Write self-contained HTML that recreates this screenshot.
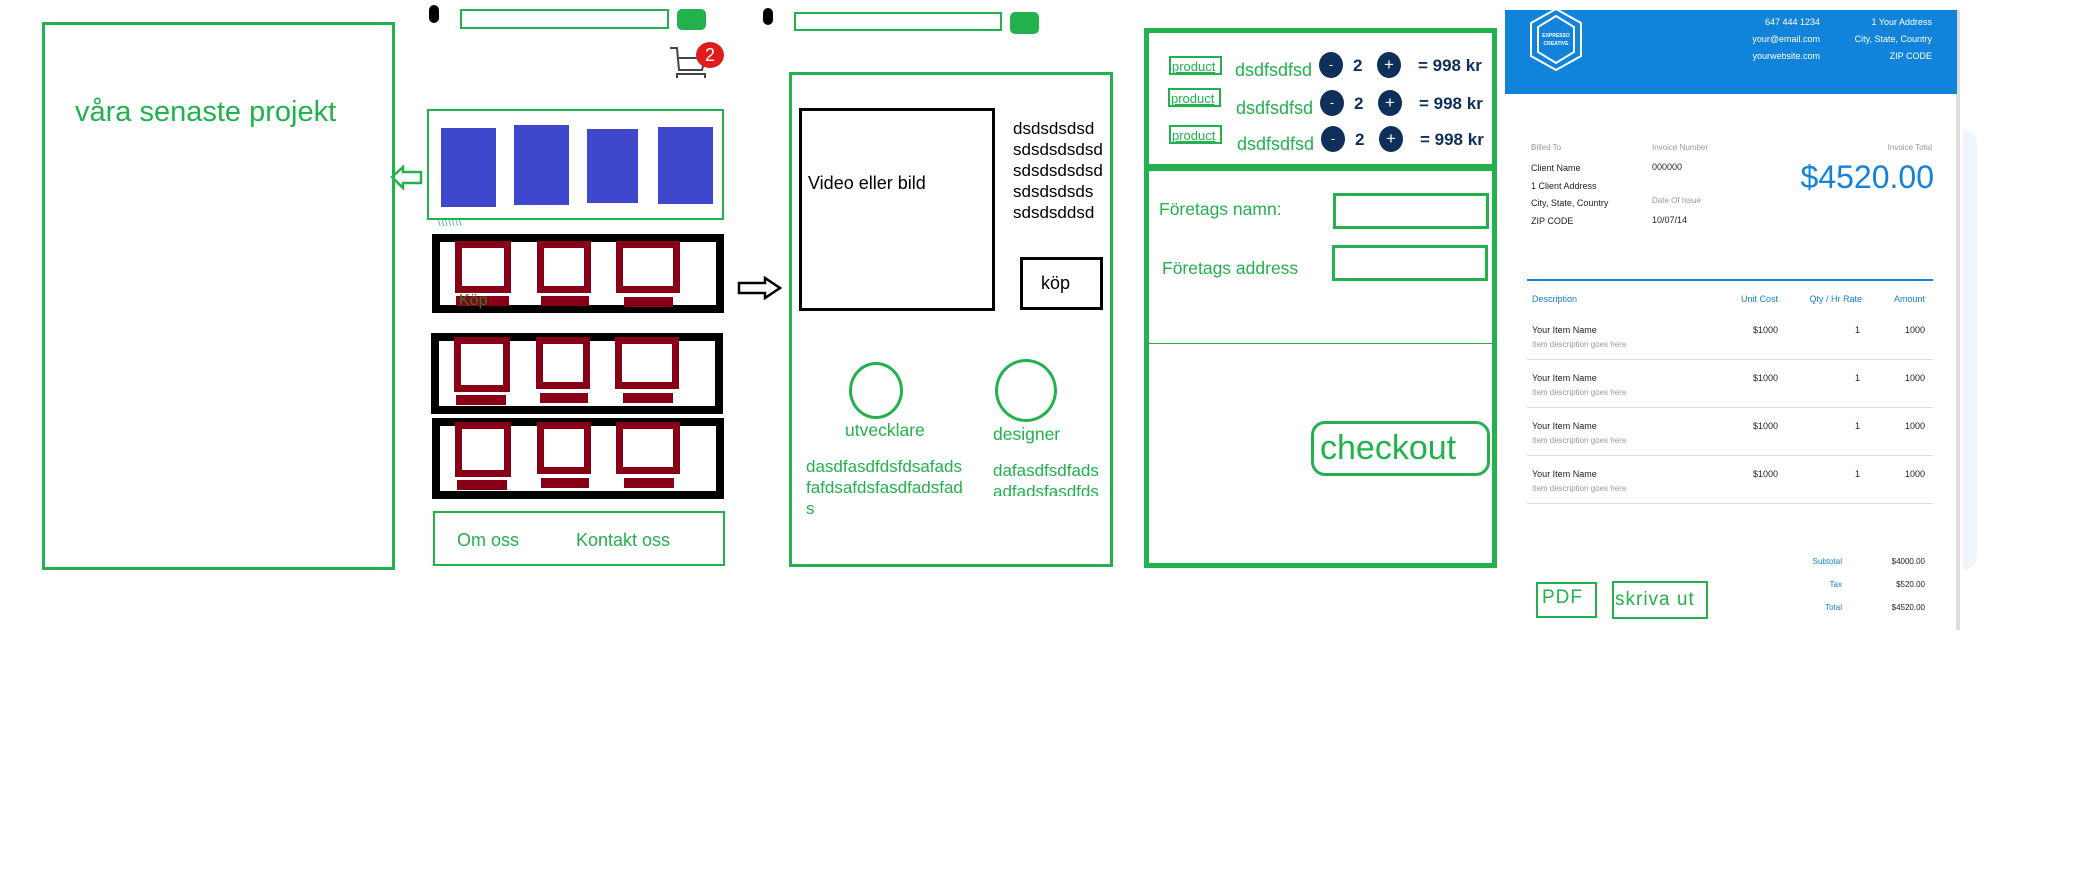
<!DOCTYPE html>
<html><head><meta charset="utf-8"><style>
*{margin:0;padding:0;box-sizing:border-box}
body{width:2079px;height:869px;background:#fff;position:relative;overflow:hidden;font-family:"Liberation Sans",sans-serif}
.a{position:absolute}
.g{color:#22b14c}
.gb{border:1px solid #22b14c}
.blk{border:8px solid #000}
.sq{position:absolute;border:7px solid #880015;width:56px;height:52px}
.bar{position:absolute;background:#880015;height:10px}
.bl{position:absolute;background:#3f48cc}
.t{position:absolute;white-space:nowrap;line-height:1}
.inv{font-size:9px;color:#222}
.lt{color:#999}
.bt{color:#1283da}
.r{text-align:right}
</style></head><body>

<div class="a" style="left:42px;top:22px;width:353px;height:548px;border:3px solid #22b14c"></div>
<div class="t g" style="left:75px;top:98px;font-size:29px">våra senaste projekt</div>
<svg class="a" style="left:390px;top:165px" width="34" height="25"><path d="M2 12 L13 2 L13 7 L31 7 L31 18 L13 18 L13 23 Z" fill="none" stroke="#22b14c" stroke-width="2.5"/></svg>

<div class="a" style="left:429px;top:5px;width:10px;height:18px;background:#000;border-radius:5px"></div>
<div class="a gb" style="left:460px;top:9px;width:209px;height:20px;border-width:2px"></div>
<div class="a" style="left:677px;top:9px;width:29px;height:21px;background:#22b14c;border-radius:5px"></div>
<svg class="a" style="left:668px;top:40px" width="50" height="50"><path d="M2 8 H9 L11 30 H34 L37 18 H11" fill="none" stroke="#444" stroke-width="2"/><path d="M9 38 V34 H37 V38" fill="none" stroke="#444" stroke-width="2"/></svg>
<div class="a" style="left:696px;top:42px;width:28px;height:26px;border-radius:50%;background:#e01b1b;color:#fff;font-size:18px;text-align:center;line-height:26px">2</div>

<div class="a gb" style="left:427px;top:109px;width:297px;height:111px;border-width:2px"></div>
<div class="bl" style="left:441px;top:128px;width:55px;height:79px"></div>
<div class="bl" style="left:514px;top:125px;width:55px;height:80px"></div>
<div class="bl" style="left:587px;top:129px;width:51px;height:74px"></div>
<div class="bl" style="left:658px;top:127px;width:55px;height:77px"></div>
<div class="t" style="left:438px;top:219px;font-size:9px;color:#2a8;letter-spacing:1px">\\\\\\\</div>

<div class="a blk" style="left:432px;top:234px;width:292px;height:79px"></div>
<div class="sq" style="left:455px;top:241px"></div><div class="sq" style="left:537px;top:241px;width:54px"></div><div class="sq" style="left:616px;top:241px;width:64px"></div>
<div class="bar" style="left:456px;top:296px;width:53px"></div><div class="bar" style="left:541px;top:296px;width:48px"></div><div class="bar" style="left:624px;top:297px;width:49px"></div>
<div class="t" style="left:459px;top:293px;font-size:16px;color:#2a7a2a">Köp</div>

<div class="a blk" style="left:431px;top:333px;width:292px;height:81px"></div>
<div class="sq" style="left:454px;top:337px;height:55px"></div><div class="sq" style="left:536px;top:337px;width:54px"></div><div class="sq" style="left:615px;top:337px;width:64px"></div>
<div class="bar" style="left:456px;top:395px;width:50px"></div><div class="bar" style="left:540px;top:393px;width:48px"></div><div class="bar" style="left:623px;top:393px;width:50px"></div>

<div class="a blk" style="left:432px;top:418px;width:292px;height:81px"></div>
<div class="sq" style="left:455px;top:422px;height:55px"></div><div class="sq" style="left:537px;top:422px;width:54px"></div><div class="sq" style="left:616px;top:422px;width:64px"></div>
<div class="bar" style="left:457px;top:480px;width:50px"></div><div class="bar" style="left:541px;top:478px;width:48px"></div><div class="bar" style="left:624px;top:478px;width:50px"></div>

<div class="a gb" style="left:433px;top:511px;width:292px;height:55px;border-width:2px"></div>
<div class="t g" style="left:457px;top:531px;font-size:18px">Om oss</div>
<div class="t g" style="left:576px;top:531px;font-size:18px">Kontakt oss</div>

<svg class="a" style="left:737px;top:276px" width="46" height="24"><path d="M2 7 H28 V2 L43 12 L28 22 V17 H2 Z" fill="none" stroke="#000" stroke-width="2.5"/></svg>

<div class="a" style="left:763px;top:8px;width:10px;height:17px;background:#000;border-radius:5px"></div>
<div class="a gb" style="left:794px;top:12px;width:208px;height:19px;border-width:2px"></div>
<div class="a" style="left:1010px;top:12px;width:29px;height:22px;background:#22b14c;border-radius:5px"></div>
<div class="a" style="left:789px;top:72px;width:324px;height:495px;border:3px solid #22b14c"></div>
<div class="a" style="left:799px;top:108px;width:196px;height:203px;border:3px solid #000"></div>
<div class="t" style="left:808px;top:174px;font-size:18px">Video eller bild</div>
<div class="a" style="left:1013px;top:118px;font-size:17px;line-height:21px">dsdsdsdsd<br>sdsdsdsdsd<br>sdsdsdsdsd<br>sdsdsdsds<br>sdsdsddsd</div>
<div class="a" style="left:1020px;top:257px;width:83px;height:53px;border:3px solid #000"></div>
<div class="t" style="left:1041px;top:274px;font-size:18px">köp</div>
<div class="a" style="left:849px;top:362px;width:54px;height:57px;border:3px solid #22b14c;border-radius:50%"></div>
<div class="a" style="left:995px;top:359px;width:62px;height:63px;border:3px solid #22b14c;border-radius:50%"></div>
<div class="t g" style="left:845px;top:422px;font-size:17.5px">utvecklare</div>
<div class="t g" style="left:993px;top:426px;font-size:17.5px">designer</div>
<div class="a g" style="left:806px;top:456px;font-size:17px;line-height:21px">dasdfasdfdsfdsafads<br>fafdsafdsfasdfadsfad<br>s</div>
<div class="a g" style="left:993px;top:460px;font-size:17px;line-height:21px;height:36px;overflow:hidden">dafasdfsdfads<br>adfadsfasdfds</div>

<div class="a" style="left:1144px;top:28px;width:353px;height:540px;border:5px solid #22b14c"></div>
<div class="a" style="left:1144px;top:164px;width:353px;height:6px;background:#22b14c"></div>
<div class="a" style="left:1148px;top:170px;width:345px;height:174px;border:1px solid #22b14c"></div>

<div class="t g gb" style="left:1169px;top:56px;width:53px;height:19px;font-size:13px;line-height:17px;padding-left:1px;border-width:2px;text-decoration:underline">product</div>
<div class="t g gb" style="left:1168px;top:88px;width:53px;height:19px;font-size:13px;line-height:17px;padding-left:1px;border-width:2px;text-decoration:underline">product</div>
<div class="t g gb" style="left:1169px;top:125px;width:53px;height:19px;font-size:13px;line-height:17px;padding-left:1px;border-width:2px;text-decoration:underline">product</div>

<div class="t g" style="left:1235px;top:61px;font-size:18px">dsdfsdfsd</div>
<div class="t g" style="left:1236px;top:99px;font-size:18px">dsdfsdfsd</div>
<div class="t g" style="left:1237px;top:135px;font-size:18px">dsdfsdfsd</div>

<div class="a" style="left:1319px;top:52px;width:24px;height:26px;border-radius:50%;background:#0e2f5a;color:#fff;text-align:center;line-height:25px;font-size:13px">-</div>
<div class="a" style="left:1377px;top:52px;width:24px;height:26px;border-radius:50%;background:#0e2f5a;color:#fff;text-align:center;line-height:26px;font-size:17px">+</div>
<div class="t" style="left:1353px;top:57px;font-size:17px;font-weight:bold;color:#0e2f5a">2</div>
<div class="t" style="left:1418px;top:57px;font-size:17px;font-weight:bold;color:#0e2f5a">= 998 kr</div>

<div class="a" style="left:1320px;top:90px;width:24px;height:26px;border-radius:50%;background:#0e2f5a;color:#fff;text-align:center;line-height:25px;font-size:13px">-</div>
<div class="a" style="left:1378px;top:90px;width:24px;height:26px;border-radius:50%;background:#0e2f5a;color:#fff;text-align:center;line-height:26px;font-size:17px">+</div>
<div class="t" style="left:1354px;top:95px;font-size:17px;font-weight:bold;color:#0e2f5a">2</div>
<div class="t" style="left:1419px;top:95px;font-size:17px;font-weight:bold;color:#0e2f5a">= 998 kr</div>

<div class="a" style="left:1321px;top:126px;width:24px;height:26px;border-radius:50%;background:#0e2f5a;color:#fff;text-align:center;line-height:25px;font-size:13px">-</div>
<div class="a" style="left:1379px;top:126px;width:24px;height:26px;border-radius:50%;background:#0e2f5a;color:#fff;text-align:center;line-height:26px;font-size:17px">+</div>
<div class="t" style="left:1355px;top:131px;font-size:17px;font-weight:bold;color:#0e2f5a">2</div>
<div class="t" style="left:1420px;top:131px;font-size:17px;font-weight:bold;color:#0e2f5a">= 998 kr</div>

<div class="t g" style="left:1159px;top:201px;font-size:17.5px">Företags namn:</div>
<div class="a" style="left:1333px;top:193px;width:156px;height:36px;border:3px solid #22b14c"></div>
<div class="t g" style="left:1162px;top:260px;font-size:17.5px">Företags address</div>
<div class="a" style="left:1332px;top:245px;width:156px;height:36px;border:3px solid #22b14c"></div>
<div class="a" style="left:1311px;top:421px;width:179px;height:55px;border:3px solid #22b14c;border-radius:14px"></div>
<div class="t g" style="left:1320px;top:431px;font-size:34px">checkout</div>

<div class="a" style="left:1963px;top:130px;width:14px;height:440px;background:#eef5fd;border-radius:0 20px 20px 0"></div>
<div class="a" style="left:1505px;top:10px;width:455px;height:620px;background:#fff;border-right:4px solid #ddd"></div>
<div class="a" style="left:1505px;top:10px;width:452px;height:84px;background:#1283da"></div>
<svg class="a" style="left:1528px;top:6px" width="56" height="70"><path d="M28 3 L53 17 L53 50 L28 64 L3 50 L3 17 Z" fill="none" stroke="#fff" stroke-width="2"/><path d="M28 10 L46 21 L46 46 L28 57 L10 46 L10 21 Z" fill="none" stroke="#fff" stroke-width="2"/><text x="28" y="31" font-size="5" fill="#fff" text-anchor="middle" font-weight="bold" font-family="Liberation Sans">EXPRESSO</text><text x="28" y="39" font-size="5" fill="#fff" text-anchor="middle" font-weight="bold" font-family="Liberation Sans">CREATIVE</text></svg>
<div class="a r" style="left:1700px;top:14px;width:120px;font-size:9px;line-height:17px;color:#fff">647 444 1234<br>your@email.com<br>yourwebsite.com</div>
<div class="a r" style="left:1812px;top:14px;width:120px;font-size:9px;line-height:17px;color:#fff">1 Your Address<br>City, State, Country<br>ZIP CODE</div>

<div class="t inv lt" style="left:1531px;top:144px;font-size:8px">Billed To</div>
<div class="a inv" style="left:1531px;top:160px;line-height:17.5px">Client Name<br>1 Client Address<br>City, State, Country<br>ZIP CODE</div>
<div class="t inv lt" style="left:1652px;top:144px;font-size:8px">Invoice Number</div>
<div class="t inv" style="left:1652px;top:163px">000000</div>
<div class="t inv lt" style="left:1652px;top:197px;font-size:8px">Date Of Issue</div>
<div class="t inv" style="left:1652px;top:216px">10/07/14</div>
<div class="t inv lt r" style="left:1832px;top:144px;width:100px;font-size:8px">Invoice Total</div>
<div class="t bt r" style="left:1762px;top:161px;width:172px;font-size:32px">$4520.00</div>

<div class="a" style="left:1527px;top:279px;width:406px;height:2px;background:#1283da"></div>
<div class="t inv bt" style="left:1532px;top:295px">Description</div>
<div class="t inv bt r" style="left:1700px;top:295px;width:78px">Unit Cost</div>
<div class="t inv bt r" style="left:1782px;top:295px;width:80px">Qty / Hr Rate</div>
<div class="t inv bt r" style="left:1865px;top:295px;width:60px">Amount</div>

<div class="a inv" style="left:1532px;top:323px;line-height:14px">Your Item Name<br><span class="lt" style="font-size:8px">Item description goes here</span></div>
<div class="a inv" style="left:1532px;top:371px;line-height:14px">Your Item Name<br><span class="lt" style="font-size:8px">Item description goes here</span></div>
<div class="a inv" style="left:1532px;top:419px;line-height:14px">Your Item Name<br><span class="lt" style="font-size:8px">Item description goes here</span></div>
<div class="a inv" style="left:1532px;top:467px;line-height:14px">Your Item Name<br><span class="lt" style="font-size:8px">Item description goes here</span></div>
<div class="a inv r" style="left:1700px;top:306px;width:78px;line-height:48px">$1000<br>$1000<br>$1000<br>$1000</div>
<div class="a inv r" style="left:1782px;top:306px;width:78px;line-height:48px">1<br>1<br>1<br>1</div>
<div class="a inv r" style="left:1865px;top:306px;width:60px;line-height:48px">1000<br>1000<br>1000<br>1000</div>
<div class="a" style="left:1527px;top:359px;width:406px;height:1px;background:#ddd"></div>
<div class="a" style="left:1527px;top:407px;width:406px;height:1px;background:#ddd"></div>
<div class="a" style="left:1527px;top:455px;width:406px;height:1px;background:#ddd"></div>
<div class="a" style="left:1527px;top:503px;width:406px;height:1px;background:#ddd"></div>

<div class="a inv bt r" style="left:1762px;top:550px;width:80px;font-size:8px;line-height:23px">Subtotal<br>Tax<br>Total</div>
<div class="a inv r" style="left:1845px;top:550px;width:80px;font-size:8px;line-height:23px">$4000.00<br>$520.00<br>$4520.00</div>

<div class="a gb" style="left:1536px;top:582px;width:61px;height:36px;border-width:2px"></div>
<div class="t g" style="left:1542px;top:588px;font-size:19px;letter-spacing:1px">PDF</div>
<div class="a gb" style="left:1612px;top:581px;width:96px;height:38px;border-width:2px"></div>
<div class="t g" style="left:1615px;top:590px;font-size:19px;letter-spacing:1px">skriva ut</div>

</body></html>
